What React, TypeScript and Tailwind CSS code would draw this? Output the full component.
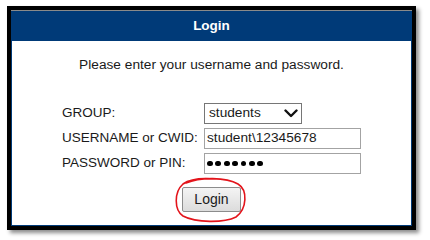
import React from 'react';

const font = { fontFamily: '"Liberation Sans", Arial, sans-serif' };

function Chevron() {
  return (
    <svg width="14" height="9" viewBox="0 0 14 9" className="block">
      <path d="M1.5 1.5 L7 7 L12.5 1.5" fill="none" stroke="#111" strokeWidth="2.4" strokeLinecap="round" strokeLinejoin="round" />
    </svg>
  );
}

function PasswordDots({ count }: { count: number }) {
  return (
    <div className="flex items-center gap-[2.6px]">
      {Array.from({ length: count }).map((_, i) => (
        <span key={i} className="block h-[5.8px] w-[5.8px] rounded-full bg-black" />
      ))}
    </div>
  );
}

export default function App() {
  return (
    <div className="h-[240px] w-[430px] bg-white pt-[6px] pl-[7px]" style={font}>
      <div className="w-[409px] border-4 border-black shadow-[3px_3px_4px_rgba(0,0,0,0.45)]">
        {/* header */}
        <div className="flex h-[31px] items-center justify-center border-t border-[#8a8a8a] bg-[#003a78]">
          <span className="text-[13.5px] font-bold text-white">Login</span>
        </div>

        {/* body */}
        <div className="flex h-[185px] flex-col items-center border-x border-b border-[#003a78] bg-white pt-[16px] text-[#1a1a1a]">
          <p className="text-[13.7px] leading-[16px]">Please enter your username and password.</p>

          <div className="mt-[30px] grid grid-cols-[142px_157px] gap-y-[4px]">
            <div className="flex h-[21px] items-center text-[13.5px]">GROUP:</div>
            <div className="flex h-[21px] w-[98px] items-center justify-between border border-[#767676] bg-white pl-[4px] pr-[3px] text-[13.7px]">
              <span>students</span>
              <Chevron />
            </div>

            <div className="flex h-[21px] items-center text-[13.5px]">USERNAME or CWID:</div>
            <div className="flex h-[21px] items-center border border-[#a3a3a3] bg-white pl-[2px] text-[13.7px]">
              student\12345678
            </div>

            <div className="flex h-[21px] items-center text-[13.5px]">PASSWORD or PIN:</div>
            <div className="flex h-[21px] items-center border border-[#a3a3a3] bg-white pl-[2px]">
              <PasswordDots count={7} />
            </div>
          </div>

          <div className="relative mt-[13px]">
            <button
              type="button"
              className="flex h-[25px] w-[59px] items-center justify-center rounded-[2px] border border-[#8c8c8c] bg-gradient-to-b from-[#f4f4f4] to-[#dcdcdc] text-[14px] text-[#1a1a1a]"
            >
              Login
            </button>
            {/* red hand-drawn circle */}
            <svg
              width="74"
              height="48"
              viewBox="0 0 74 48"
              className="pointer-events-none absolute left-[-8px] top-[-11px]"
            >
              <path
                d="M12 7 C26 1, 52 1, 64 8 C74 14, 73 33, 62 41 C50 47, 22 47, 9 40 C0 34, 0 16, 9 8 C16 3, 28 2, 40 3"
                fill="none"
                stroke="#e3141b"
                strokeWidth="1.6"
                strokeLinecap="round"
              />
            </svg>
          </div>
        </div>
      </div>
    </div>
  );
}
